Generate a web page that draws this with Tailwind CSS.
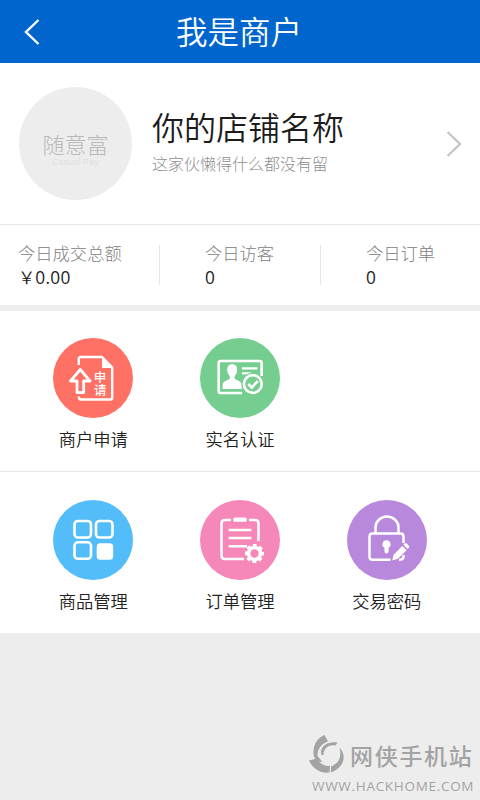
<!DOCTYPE html>
<html lang="zh-CN">
<head>
<meta charset="utf-8">
<title>我是商户</title>
<script src="https://cdn.jsdelivr.net/npm/@tailwindcss/browser@4"></script>
</head>
<body class="bg-[#ededed]">
<div class="w-[480px] h-[800px] overflow-hidden flex flex-col bg-[#ededed] font-['Noto_Sans_CJK_SC',sans-serif] text-[#222]">
  <header class="h-[63px] shrink-0 bg-[#0066cd] grid grid-cols-[60px_1fr_60px] items-center">
    <svg class="w-4 h-7 ml-6" viewBox="0 0 16 28" fill="none" stroke="#fff" stroke-width="2.4"><path d="M14.5 2 2 14l12.500 12"/></svg>
    <h1 class="text-center text-white text-[31.5px] leading-[60px] font-[350] pr-[2px] -mt-[3px]">我是商户</h1>
  </header>

  <section class="h-[162px] shrink-0 bg-white border-b border-[#e6e6e8] flex items-center pl-[19px] pr-[18px]">
    <div class="size-[113px] rounded-full bg-[#ededed] flex flex-col items-center justify-center text-[#b8b8b8] -mt-[1px]">
      <span class="text-[22px] leading-[24px] font-light mt-[11px]">随意富</span>
      <span class="text-[8.5px] leading-[9px] text-[#dedede] font-['Liberation_Sans',sans-serif] tracking-[0.3px] mt-[3px]">Casual Pay</span>
    </div>
    <div class="ml-5 flex-1 -mt-[7px]">
      <h2 class="text-[32px] leading-[42px] text-[#1c1c1c] font-[350]">你的店铺名称</h2>
      <p class="text-[16px] leading-[24px] mt-[4px] text-[#8f8f8f] font-light">这家伙懒得什么都没有留</p>
    </div>
    <svg class="w-4 h-7" viewBox="0 0 16 28" fill="none" stroke="#c4c4c4" stroke-width="2.2"><path d="M1.500 2 14 14 1.500 26"/></svg>
  </section>

  <section class="h-[80px] shrink-0 bg-white flex items-center">
    <div class="w-[159px] pl-[18px]">
      <p class="text-[17.3px] leading-6 text-[#808080] font-light">今日成交总额</p>
      <p class="text-[17.3px] leading-6 font-[350]">￥<span class="font-['Open_Sans',sans-serif] font-normal tracking-[0.3px]">0.00</span></p>
    </div>
    <div class="w-px h-10 bg-[#e6e6e8]"></div>
    <div class="w-[160px] pl-[45px]">
      <p class="text-[17.3px] leading-6 text-[#808080] font-light">今日访客</p>
      <p class="text-[17.3px] leading-[26px] -mb-[2px] font-['Open_Sans',sans-serif]">0</p>
    </div>
    <div class="w-px h-10 bg-[#e6e6e8]"></div>
    <div class="flex-1 pl-[45px]">
      <p class="text-[17.3px] leading-6 text-[#808080] font-light">今日订单</p>
      <p class="text-[17.3px] leading-[26px] -mb-[2px] font-['Open_Sans',sans-serif]">0</p>
    </div>
  </section>

  <main class="mt-[6px] shrink-0 bg-white text-[17.3px] leading-6 font-[350]">
    <div class="h-[161px] border-b border-[#e6e6e8] pl-5 pt-[27px] grid grid-cols-[146.7px_146.7px_146.7px] content-start">
      <div class="flex flex-col items-center gap-[9px]">
        <svg class="size-20" viewBox="0 0 80 80" fill="none" stroke="#fff" stroke-width="2.4">
          <circle cx="40" cy="40" r="40" fill="#ff7065" stroke="none"/>
          <path d="M25.800 27v-6q0-2 2-2H49l10.200 10.500V59.500q0 2-2 2H28q-2.200 0-2.200-3"/>
          <path d="M49 18v12h10.500z" fill="#fff" stroke="none"/>
          <path d="M27.300 31.500 17.500 43h6.500v11.500h6.700V43h6.300z" stroke-linejoin="round" stroke-width="2.800"/>
          <g fill="#fff" stroke="none" font-size="12.500" font-weight="500" text-anchor="middle"><text x="47" y="43.800">申</text><text x="47.300" y="57">请</text></g>
        </svg>
        <span>商户申请</span>
      </div>
      <div class="flex flex-col items-center gap-[9px]">
        <svg class="size-20" viewBox="0 0 80 80" fill="none" stroke="#fff" stroke-width="2.600">
          <circle cx="40" cy="40" r="40" fill="#75ce8f" stroke="none"/>
          <path d="M42 55H20.700q-2 0-2-2V25q0-2 2-2H59.600q2 0 2 2V38"/>
          <path d="M32.200 26.300c-3.500 0-5.200 2.400-5 5.600.1 2.600 1 4.600 2.600 6v2.600c-1 1.800-7.200 2-7.200 6.300V51h19.200v-4.200c0-4.300-6.200-4.500-7.200-6.300v-2.600c1.600-1.400 2.500-3.400 2.600-6 .2-3.200-1.500-5.600-5-5.600z" fill="#fff" stroke="none"/>
          <path d="M42 30.300h15.500M42 35.300h9" stroke-width="2.200"/>
          <circle cx="52.800" cy="46" r="11.300" fill="#75ce8f" stroke="none"/>
          <circle cx="52.800" cy="46" r="8.900"/>
          <path d="m48.300 46 3.500 3.500 6-6.500"/>
        </svg>
        <span>实名认证</span>
      </div>
    </div>
    <div class="h-[161px] pl-5 pt-[28px] grid grid-cols-[146.7px_146.7px_146.7px] content-start">
      <div class="flex flex-col items-center gap-[9px]">
        <svg class="size-20" viewBox="0 0 80 80" fill="none" stroke="#fff" stroke-width="2.600">
          <circle cx="40" cy="40" r="40" fill="#52bdf9" stroke="none"/>
          <rect x="21.500" y="21" width="16.500" height="16.500" rx="3.500"/>
          <rect x="43" y="21" width="16.500" height="16.500" rx="3.500"/>
          <rect x="21.500" y="42.300" width="16.500" height="16.500" rx="3.500"/>
          <rect x="43.700" y="43.300" width="16.500" height="16.500" rx="3.500" fill="#fff" stroke="none"/>
        </svg>
        <span>商品管理</span>
      </div>
      <div class="flex flex-col items-center gap-[9px]">
        <svg class="size-20" viewBox="0 0 80 80" fill="none" stroke="#fff" stroke-width="2.500">
          <circle cx="40" cy="40" r="40" fill="#f588b8" stroke="none"/>
          <path d="M31 20h-6q-3.500 0-3.500 3.500v32q0 3.500 3.500 3.500h19M49 20h6q3.500 0 3.500 3.500V41"/>
          <rect x="33.300" y="17.500" width="13.400" height="4.200" rx="1.500" fill="#fff" stroke="none"/>
          <path d="M28.700 30h22.600M28.700 38h22.600M28.700 46.300H47"/>
          <circle cx="54.500" cy="53.500" r="6" stroke-width="3.600"/>
          <circle cx="54.500" cy="53.500" r="8.300" stroke-width="2.600" stroke-dasharray="3.800 2.719" stroke-dashoffset="1.900"/>
        </svg>
        <span>订单管理</span>
      </div>
      <div class="flex flex-col items-center gap-[9px]">
        <svg class="size-20" viewBox="0 0 80 80" fill="none" stroke="#fff" stroke-width="2.500">
          <circle cx="40" cy="40" r="40" fill="#b888dd" stroke="none"/>
          <path d="M28.500 33v-5.500a11.500 11 0 0 1 23 0V33"/>
          <path d="M43.500 59.800H25.500q-3 0-3-3V36.500q0-3 3-3h28q3 0 3 3V43M56.500 55v1.500q0 3.300-4.500 3.300"/>
          <path d="M39.500 40.300a4 4 0 0 0-2 7.500V51.500a2 2 0 0 0 4 0v-3.700a4 4 0 0 0-2-7.500z" fill="#fff" stroke="none"/>
          <path d="m45.300 60.300 1.300-5.500 8.700-8.900 4.300 4.300-9 8.900zM56.400 44.800l1.300-1.300q1-.8 2 0l2.200 2.200q.9 1 0 2l-1.300 1.300z" fill="#fff" stroke="none"/>
        </svg>
        <span>交易密码</span>
      </div>
    </div>
  </main>

  <footer class="mt-[102px] ml-[309px] w-[168px] text-[#a3a3a3]">
    <div class="flex items-center gap-[5px]">
      <svg class="w-[36px] h-[39px]" viewBox="0 0 36 39" fill="currentColor">
        <path d="M15.500 0 19 6.500C11.500 9 8 15 8.500 21L13.500 27C8 27 5 23.500 4.500 19 4 10 8 3 15.500 0z"/>
        <path d="M0 25.500 8 23.500C11 29 16 31.500 21 30.800L20.500 37.500C11 38.500 4 34 0 25.500z"/>
        <path d="M22 31.500C30 28.500 33 21 30.500 13L28.500 11.500C38 17 37 32 22 37.500z"/>
        <path d="M12.500 20C10 13 17 6 28.500 7.500L26.500 10.500C20 9 14.500 13 14.500 20z"/>
      </svg>
      <span class="text-[23px] leading-[36px] font-medium tracking-[1.700px] whitespace-nowrap">网侠手机站</span>
    </div>
    <p class="pl-[3px] mt-[4px] text-[13.5px] leading-[16px] font-['Open_Sans',sans-serif] font-medium tracking-[0.7px] whitespace-nowrap">WWW.HACKHOME.COM</p>
  </footer>
</div>
</body>
</html>
